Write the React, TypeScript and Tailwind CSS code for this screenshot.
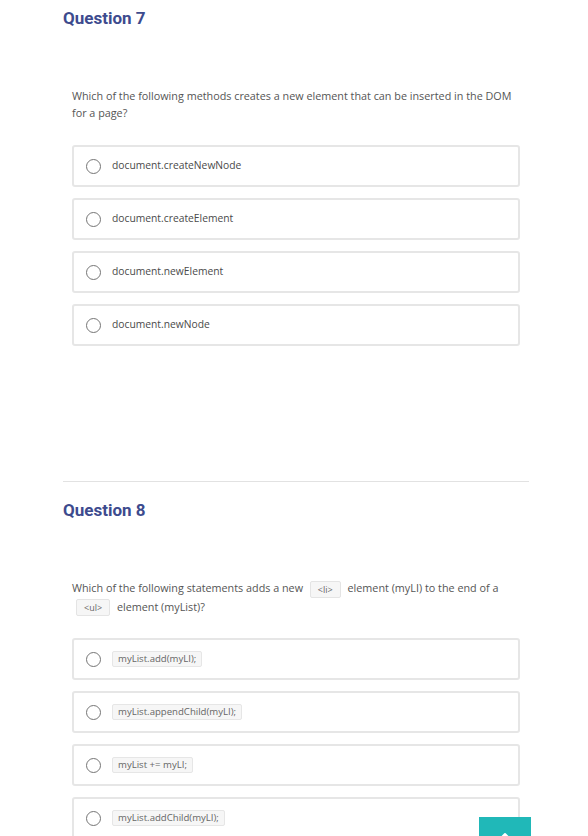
import React from 'react';

type Option = { label: string; code?: boolean };

const q7: Option[] = [
  { label: 'document.createNewNode' },
  { label: 'document.createElement' },
  { label: 'document.newElement' },
  { label: 'document.newNode' },
];

const q8: Option[] = [
  { label: 'myList.add(myLI);', code: true },
  { label: 'myList.appendChild(myLI);', code: true },
  { label: 'myList += myLI;', code: true },
  { label: 'myList.addChild(myLI);', code: true },
];

function Chip({ children }: { children: React.ReactNode }) {
  return (
    <span className="inline-flex items-center h-[17px] leading-none px-[7px] mx-[4px] bg-[#f6f6f6] border border-[#e4e4e4] rounded-[2px] text-[9px] text-[#666] align-middle">
      {children}
    </span>
  );
}

function OptionRow({ opt }: { opt: Option }) {
  return (
    <label className="flex items-center h-[42px] border-2 border-[#e6e6e6] rounded-[3px] pl-[12px] cursor-pointer">
      <span className="w-[15px] h-[15px] rounded-full border border-[#757575] bg-white shrink-0" />
      {opt.code ? (
        <span className="ml-[11px] inline-flex items-center h-[16px] px-[5px] bg-[#f6f6f6] border border-[#e6e6e6] rounded-[2px] text-[9.6px] text-[#666]">
          {opt.label}
        </span>
      ) : (
        <span className="ml-[11px] text-[10.3px] text-[#4a4a4a]">{opt.label}</span>
      )}
    </label>
  );
}

function Question({ title, text, options, gap }: { title: string; text: React.ReactNode; options: Option[]; gap: string }) {
  return (
    <div>
      <h2 className="text-[17px] leading-[24px] font-bold text-[#3d4b8e]" style={{ fontFamily: 'Roboto, sans-serif' }}>
        {title}
      </h2>
      <p className="mt-[57px] px-[9px] text-[10.8px] leading-[17px] text-[#555]">{text}</p>
      <div className={`${gap} px-[9px] flex flex-col gap-[11px]`}>
        {options.map((o) => (
          <OptionRow key={o.label} opt={o} />
        ))}
      </div>
    </div>
  );
}

export default function App() {
  return (
    <div className="relative w-[588px] h-[836px] overflow-hidden bg-white" style={{ fontFamily: '"Open Sans", "Noto Sans", sans-serif' }}>
      <div className="ml-[63px] w-[466px] pt-[6px]">
        <Question
          title="Question 7"
          text="Which of the following methods creates a new element that can be inserted in the DOM for a page?"
          options={q7}
          gap="mt-[24px]"
        />
        <div className="mt-[135px] border-t border-[#e2e2e2]" />
        <div className="pt-[16px]">
          <Question
            title="Question 8"
            text={
              <>
                Which of the following statements adds a new <Chip>&lt;li&gt;</Chip> element (myLI) to the end of a{' '}
                <Chip>&lt;ul&gt;</Chip> element (myList)?
              </>
            }
            options={q8}
            gap="mt-[22px]"
          />
        </div>
      </div>
      <button className="absolute left-[479px] top-[817px] w-[52px] h-[52px] bg-[#20b8b8] flex justify-center pt-[11px]">
        <svg width="16" height="16" viewBox="0 0 24 24" fill="none" stroke="white" strokeWidth="3" strokeLinecap="round" strokeLinejoin="round">
          <path d="M6 15l6-6 6 6" />
        </svg>
      </button>
    </div>
  );
}
